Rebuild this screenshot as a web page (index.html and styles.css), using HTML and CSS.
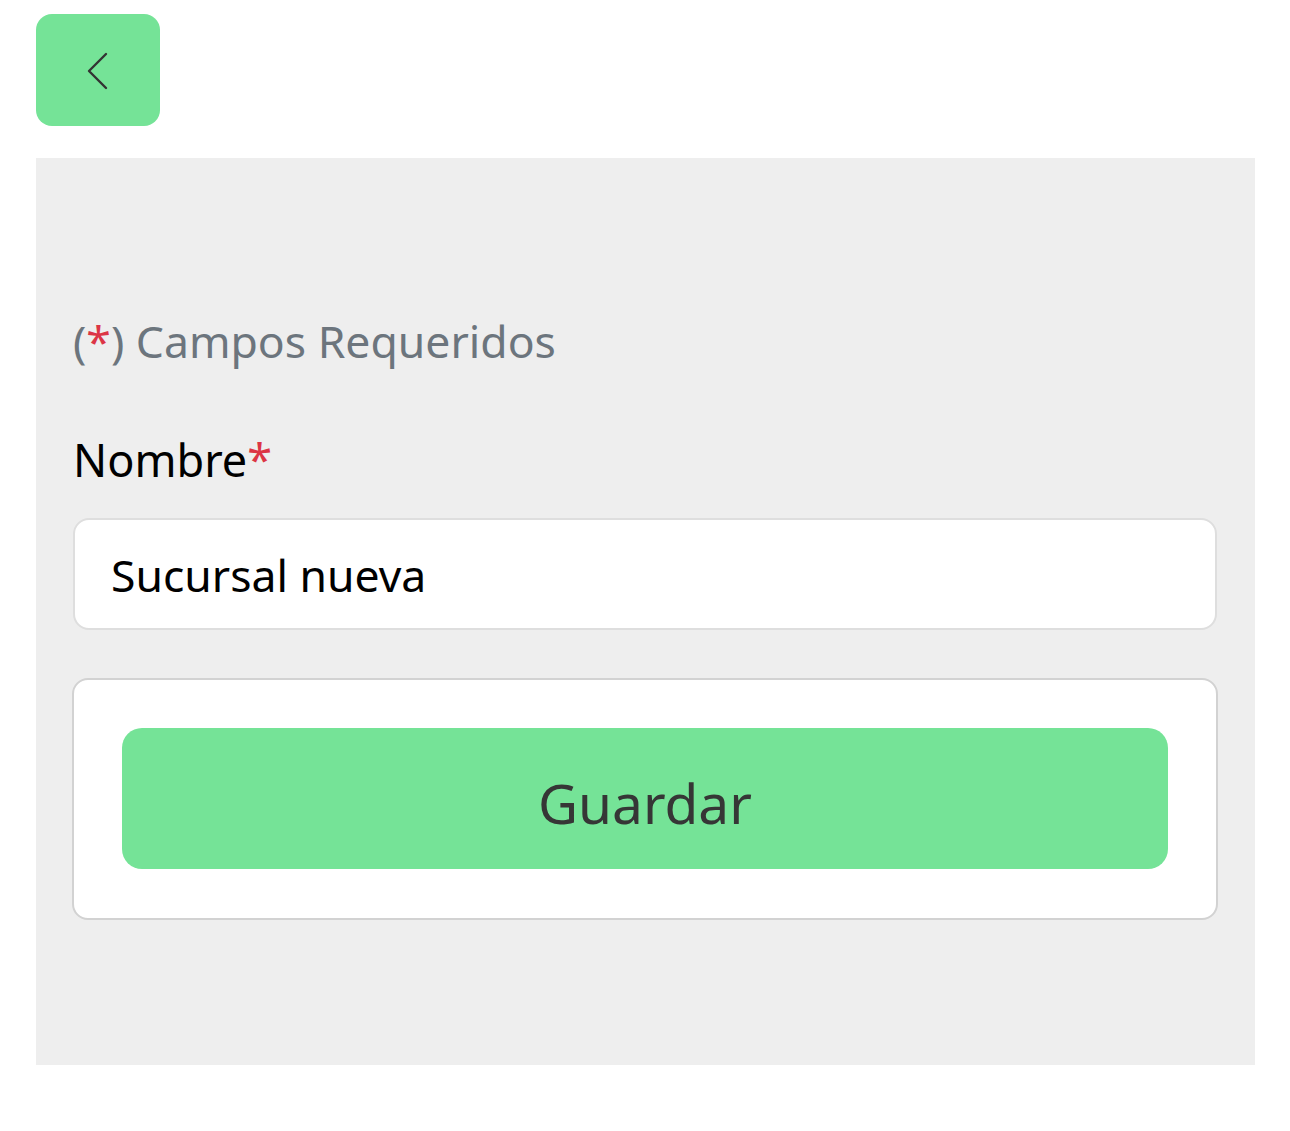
FILE: index.html
```html
<!DOCTYPE html>
<html lang="es">
<head>
<meta charset="utf-8">
<title>Sucursal</title>
<link rel="stylesheet" href="styles.css">
</head>
<body>
<div class="page">
  <div class="topbar">
    <button class="back-btn" type="button" aria-label="Volver">
      <svg width="30" height="44" viewBox="0 0 30 44" fill="none" stroke="#333" stroke-width="2.4" stroke-linecap="round" stroke-linejoin="round"><path d="M20 3 L3 20 L20 37"/></svg>
    </button>
  </div>
  <div class="panel">
    <p class="required-note">(<span class="req">*</span>) Campos Requeridos</p>
    <label class="field-label" for="nombre">Nombre<span class="req">*</span></label>
    <div class="input-box" id="nombre">Sucursal nueva</div>
    <div class="card">
      <button class="save-btn" type="button">Guardar</button>
    </div>
  </div>
</div>
</body>
</html>
```

FILE: styles.css
```css
* { box-sizing: border-box; }
html, body { margin: 0; padding: 0; background: #ffffff; }
body { font-family: "Noto Sans", "Open Sans", "Liberation Sans", sans-serif; }
.page { padding: 14px 35px 0 36px; }
.topbar { height: 144px; }
.back-btn {
  width: 124px; height: 112px;
  background: #75e397; border: none; border-radius: 16px;
  display: flex; align-items: center; justify-content: center;
  padding: 0; cursor: pointer;
}
.back-btn svg { margin-left: 6px; margin-top: 6px; }
.panel {
  background: #eeeeee;
  padding: 153px 38px 145px 37px;
  display: flex; flex-direction: column;
}
.required-note {
  margin: 0; font-size: 44.5px; line-height: 60px; color: #6c757d;
}
.req { color: #dc3545; }
.field-label {
  margin-top: 59px; font-size: 45px; line-height: 60px; color: #000;
}
.input-box {
  margin-top: 28px; height: 112px;
  background: #fff; border: 2px solid #dedede; border-radius: 16px;
  padding: 0 36px; display: flex; align-items: center;
  font-size: 44.5px; color: #000;
}
.card {
  margin-top: 48px; margin-left: -1px; margin-right: -1px;
  background: #fff; border: 2px solid #d2d2d2; border-radius: 16px;
  padding: 48px 48px 49px;
}
.save-btn {
  width: 100%; height: 141px;
  background: #75e397; border: none; border-radius: 20px;
  font-family: inherit; font-size: 55px; color: #363636;
  display: flex; align-items: center; justify-content: center;
  padding-top: 8px;
}
```
